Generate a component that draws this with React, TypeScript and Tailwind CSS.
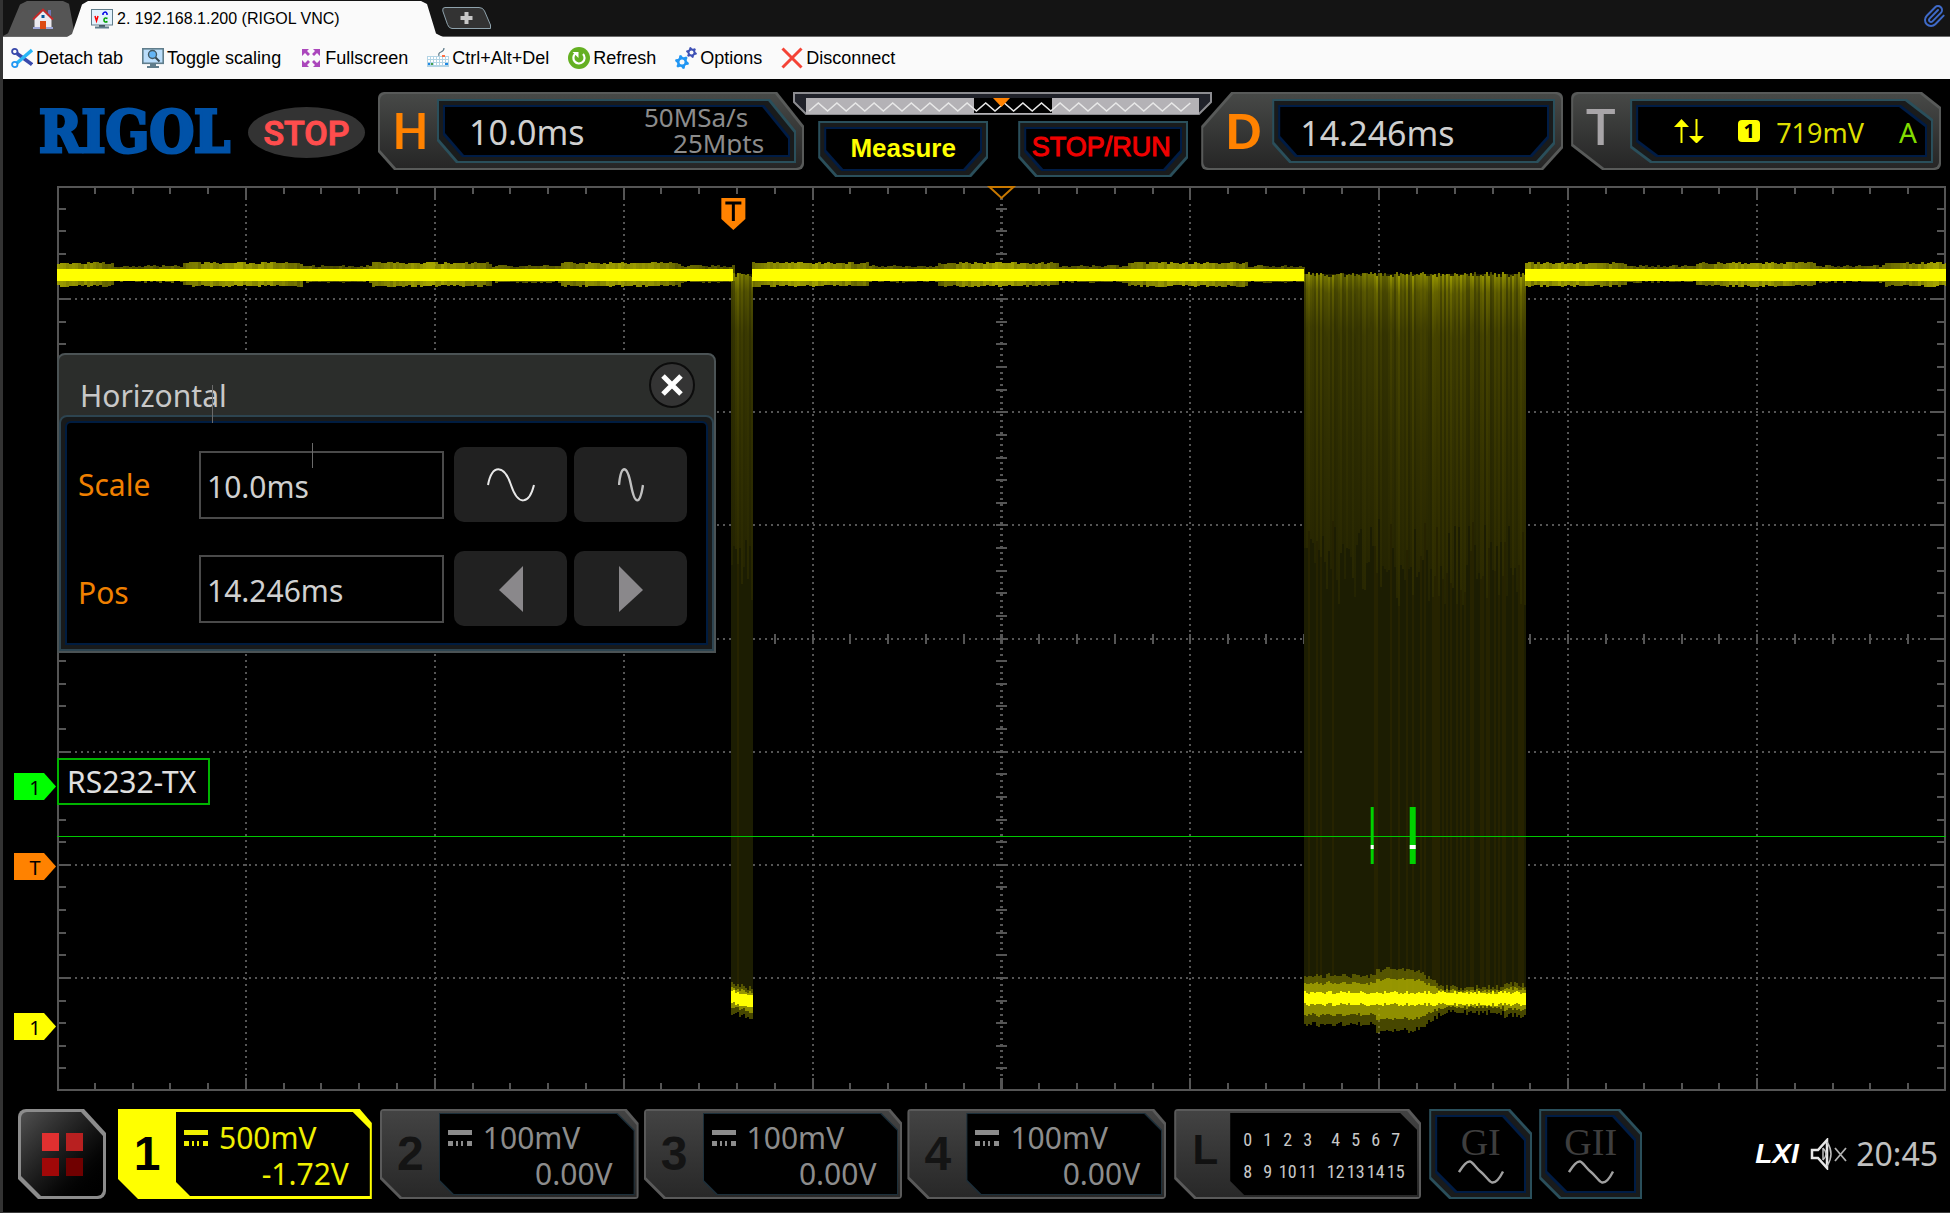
import { useState, type JSX, type ReactNode } from "react";
import { Paperclip } from "lucide-react";

interface Channel {
    id: string;
    scale: string;
    offset: string;
}

const YELLOW = "#ffff00";
const GRID = "#555555";
const GREEN = "#00c800";

// size of the plot's own coordinate system
const PLOT_W = 1888;
const PLOT_H = 905;
const DIV_X = PLOT_W / 10;
const DIV_Y = PLOT_H / 8;

const CHANNELS: Channel[] = [
    { id: "2", scale: "100mV", offset: "0.00V" },
    { id: "3", scale: "100mV", offset: "0.00V" },
    { id: "4", scale: "100mV", offset: "0.00V" },
];

const CUT_H =
    "[clip-path:polygon(0_0,calc(100%_-_27px)_0,100%_34px,100%_100%,16px_100%,0_calc(100%_-_18px))]";
const CUT_H_INNER =
    "[clip-path:polygon(0_0,calc(100%_-_26px)_0,100%_32px,100%_100%,19px_100%,0_calc(100%_-_22px))]";
const CUT_D =
    "[clip-path:polygon(30px_0,100%_0,100%_calc(100%_-_22px),calc(100%_-_20px)_100%,0_100%,0_34px)]";
const CUT_BOTTOM =
    "[clip-path:polygon(0_0,100%_0,100%_calc(100%_-_19px),calc(100%_-_17px)_100%,17px_100%,0_calc(100%_-_19px))]";
const CUT_T =
    "[clip-path:polygon(0_0,calc(100%_-_19px)_0,100%_15px,100%_100%,31px_100%,0_calc(100%_-_24px))]";
const CUT_T_INNER =
    "[clip-path:polygon(0_0,calc(100%_-_26px)_0,100%_20px,100%_100%,20px_100%,0_calc(100%_-_15px))]";
const CUT_CH =
    "[clip-path:polygon(0_0,calc(100%_-_12px)_0,100%_14px,100%_100%,20px_100%,0_calc(100%_-_20px))]";
const CUT_CH_INNER =
    "[clip-path:polygon(0_0,calc(100%_-_17px)_0,100%_17px,100%_100%,14px_100%,0_calc(100%_-_14px))]";
const CUT_GEN =
    "[clip-path:polygon(0_0,calc(100%_-_22px)_0,100%_24px,100%_100%,20px_100%,0_calc(100%_-_20px))]";

function noise(seed: number): number {
    const v = Math.sin(seed * 12.9898) * 43758.5453;
    return v - Math.floor(v);
}

function Screen({
    clip,
    className = "",
    children,
}: {
    clip: string;
    className?: string;
    children: ReactNode;
}): JSX.Element {
    return (
        <span className={`flex bg-[#2a4f5b] p-[2px] ${clip} ${className}`}>
            <span className={`flex flex-1 bg-[#191b1c] p-1 ${clip}`}>
                <span className={`flex flex-1 bg-[#001c45] p-[2px] ${clip}`}>
                    <span className={`flex flex-1 items-center bg-black ${clip}`}>
                        {children}
                    </span>
                </span>
            </span>
        </span>
    );
}

function InfoPanel({
    letter,
    letterClass,
    clip,
    innerClip,
    className,
    children,
}: {
    letter: string;
    letterClass: string;
    clip: string;
    innerClip: string;
    className: string;
    children: ReactNode;
}): JSX.Element {
    return (
        <div className={`h-[78px] rounded-md bg-[#585a59] p-[2px] ${clip} ${className}`}>
            <div
                className={`flex h-full rounded-md bg-linear-to-b from-[#474947] to-[#262626] py-[5px] pr-[6px] ${clip}`}
            >
                <span
                    className={`flex w-[57px] shrink-0 items-center justify-center text-[50px] leading-none ${letterClass}`}
                >
                    {letter}
                </span>
                <Screen clip={innerClip} className="flex-1">
                    {children}
                </Screen>
            </div>
        </div>
    );
}

function ToolButton({
    label,
    children,
}: {
    label: string;
    children: ReactNode;
}): JSX.Element {
    return (
        <button className="flex items-center gap-[3px]">
            <svg viewBox="0 0 22 22" className="size-[22px]" aria-hidden="true">
                {children}
            </svg>
            {label}
        </button>
    );
}

function gearPath(cx: number, cy: number, r: number): string {
    const pts: string[] = [];
    for (let i = 0; i < 24; i++) {
        const a = ((i + 0.5) / 24) * Math.PI * 2;
        const k = Math.floor(i / 2) % 2 === 0 ? r : r * 0.72;
        pts.push(`${cx + Math.cos(a) * k},${cy + Math.sin(a) * k}`);
    }
    return `M${pts.join("L")}Z`;
}

function TabStrip(): JSX.Element {
    return (
        <div className="flex h-[37px] items-end border-b border-[#6a6a6a] bg-[#141414]">
            <button
                aria-label="Home"
                className="flex h-[35px] w-[72px] items-center justify-center bg-[#555555] pl-2 [clip-path:polygon(0_100%,5px_92%,17px_10%,24px_0,60px_0,66px_8%,100%_100%)]"
            >
                <svg viewBox="0 0 22 22" className="size-[22px]">
                    <rect x="16" y="2" width="3" height="7" fill="#6f78b8" />
                    <path d="M2.500 11 11 3l8.500 8v10h-17z" fill="#eceaf0" />
                    <path d="M1 11.500 11 1.500l10 10" fill="none" stroke="#c62828" strokeWidth="1.800" />
                    <rect x="9.500" y="7" width="3" height="3" fill="#01579b" />
                    <rect x="8" y="13" width="6" height="8" fill="#dd4a14" />
                    <path d="M1 21h7v-2H1zM14 21h7v-2h-7z" fill="#9fa8da" />
                </svg>
            </button>
            <div className="-ml-[8px] -mb-px flex h-[36px] w-[376px] items-center gap-1 bg-[#fafafa] pl-6 font-['Liberation_Sans',sans-serif] text-[16px] text-black [clip-path:polygon(0_100%,5px_92%,15px_10%,21px_0,354px_0,360px_8%,369px_90%,100%_100%)]">
                <svg viewBox="0 0 22 20" className="h-[20px] w-[22px]" aria-hidden="true">
                    <rect x="0.500" y="0.500" width="21" height="15.500" fill="#e3f2fd" stroke="#607d8b" />
                    <rect x="8" y="16" width="6" height="2" fill="#455a64" />
                    <rect x="4" y="17.500" width="14" height="2" fill="#607d8b" />
                    <path d="m4 7 1.500 5L7 7" fill="none" stroke="red" strokeWidth="1.500" />
                    <path d="M12 6V4.500q2.500-3 4 0V6" fill="none" stroke="#0000e6" strokeWidth="1.500" />
                    <path d="M16.500 9.500q-3.500-1.500-3.500 1.500t3.500 1.500" fill="none" stroke="#00a000" strokeWidth="1.600" />
                </svg>
                <span>2. 192.168.1.200 (RIGOL VNC)</span>
            </div>
            <button aria-label="New tab" className="mb-[7px] -ml-px">
                <svg viewBox="0 0 50 22" className="h-[22px] w-[50px]">
                    <path
                        d="M3 .500h34q4 0 5.500 3.500l6 14v3.500H10q-3 0-4.500-4L.800 4Q0 .500 3 .500z"
                        fill="#333333"
                        stroke="#8fa3ad"
                    />
                    <path d="M22.500 5h4v4h4v4h-4v4h-4v-4h-4V9h4z" fill="#c8c8c8" />
                </svg>
            </button>
            <button aria-label="Attachments" className="mr-1 mb-2 ml-auto">
                <Paperclip className="size-[24px] text-[#3f6ac8]" />
            </button>
        </div>
    );
}

function Toolbar(): JSX.Element {
    return (
        <div className="flex h-[43px] items-center gap-[19px] border-b border-black bg-[#fafafa] pl-2 font-['Liberation_Sans',sans-serif] text-[18px] text-black">
            <ToolButton label="Detach tab">
                <path d="m6 6.500 15 11" stroke="#3949ab" strokeWidth="3.500" />
                <path d="m6 16 15-13" stroke="#29b6f6" strokeWidth="3.500" />
                <circle cx="3.800" cy="4.500" r="2.700" fill="none" stroke="#3949ab" strokeWidth="1.800" />
                <circle cx="3.800" cy="17.500" r="2.700" fill="none" stroke="#2196f3" strokeWidth="1.800" />
            </ToolButton>
            <ToolButton label="Toggle scaling">
                <rect x="0.800" y="1.800" width="20.400" height="14.500" fill="#bbdefb" stroke="#607d8b" strokeWidth="1.600" />
                <path d="M8 17h6v2h3v2H5v-2h3z" fill="#607d8b" />
                <circle cx="10.500" cy="7.500" r="4" fill="#64b5f6" stroke="#455a64" strokeWidth="1.400" />
                <path d="m13.500 10.500 4 4" stroke="#37474f" strokeWidth="2" />
            </ToolButton>
            <ToolButton label="Fullscreen">
                <path
                    d="M2 2h7L7 4l3 3-2 2-3-3-3 3zM20 2h-7l2 2-3 3 2 2 3-3 3 3zM2 20h7l-2-2 3-3-2-2-3 3-3-3zM20 20h-7l2-2-3-3 2-2 3 3 3-3z"
                    fill="#ab47bc"
                />
            </ToolButton>
            <ToolButton label="Ctrl+Alt+Del">
                <path d="M12 9q-1-3 2-4t3-4" fill="none" stroke="#607d8b" strokeWidth="1.200" />
                <rect x="0" y="9" width="22" height="11" fill="#b3d4e5" />
                <path d="M1 11h20M1 14h20M1 17h20" stroke="#ffffff" strokeWidth="1.800" strokeDasharray="2 1" />
                <rect x="15" y="8" width="3" height="2" fill="#ff7043" />
                <path d="M1 16h2v2H1zM18 16h3v2h-3z" fill="#1e88e5" />
                <path d="M4 16h2v2H4z" fill="#43a047" />
            </ToolButton>
            <ToolButton label="Refresh">
                <circle cx="11" cy="11" r="11" fill="#64b022" />
                <path d="M7.500 6.500A5.600 5.600 0 1 0 15 7" fill="none" stroke="#ffffff" strokeWidth="2.200" />
                <path d="M4.500 5h6v6z" fill="#ffffff" />
            </ToolButton>
            <ToolButton label="Options">
                <path d={gearPath(7, 15, 7)} fill="#2196f3" />
                <circle cx="7" cy="15" r="2.500" fill="#fafafa" />
                <path d={gearPath(16.500, 5.500, 5.500)} fill="#3f51b5" />
                <circle cx="16.500" cy="5.500" r="2" fill="#fafafa" />
            </ToolButton>
            <ToolButton label="Disconnect">
                <path d="m1.500 1.500 19 19M20.500 1.500l-19 19" stroke="#f44336" strokeWidth="3" />
            </ToolButton>
        </div>
    );
}

function MemoryBar(): JSX.Element {
    const zig = Array.from({ length: 42 }, (_, i) => `${16 + i * 9.3},${i % 2 ? 11 : 19}`);
    return (
        <svg viewBox="0 0 419 23" className="h-[23px] w-[419px]" aria-hidden="true">
            <path d="M1 1h417v9l-12 12H13L1 10z" fill="#20222a" stroke="#8c8c90" strokeWidth="2" />
            <rect x="13" y="6" width="393" height="16" fill="#b4b2b6" />
            <rect x="181" y="6" width="78" height="15" fill="#000000" />
            <polyline points={zig.join(" ")} fill="none" stroke="#e8e8e8" strokeWidth="1.600" />
            <path d="M200 6h17l-8.500 9z" fill="#ff8200" />
        </svg>
    );
}

function StatusHeader(): JSX.Element {
    return (
        <header className="flex h-[106px] items-start pt-3 pr-[9px] pl-9">
            <div className="w-[209px] pt-[10px] font-['DejaVu_Serif_Condensed','DejaVu_Serif',serif] text-[57px] leading-[60px] font-bold text-[#0052a8] [-webkit-text-stroke:3px_#0052a8]">
                RIGOL
            </div>
            <div className="mt-[15px] mr-[13px] flex h-[51px] w-[117px] shrink-0 items-center justify-center rounded-[50%] bg-[#333333] pt-[2px] font-[Roboto,sans-serif] text-[34px] font-medium text-[#ff4d4d] [-webkit-text-stroke:1px_#ff4d4d]">
                STOP
            </div>
            <InfoPanel
                letter="H"
                letterClass="pt-[2px] pl-1 font-[Roboto,sans-serif] font-medium text-[#ff8200]"
                clip={CUT_H}
                innerClip={CUT_H_INNER}
                className="flex-[427_1_0]"
            >
                <span className="pt-[2px] pl-6 text-[34px] leading-none text-[#d0d0d0]">10.0ms</span>
                <span className="ml-auto flex flex-col items-end pr-6 pb-[2px] text-[26px] leading-[26px] text-[#8c8c8c]">
                    <span className="pr-4">50MSa/s</span>
                    <span>25Mpts</span>
                </span>
            </InfoPanel>
            <div className="-mx-[11px] flex w-[419px] shrink-0 flex-col">
                <MemoryBar />
                <div className="mt-[6px] flex gap-[30px] pl-[25px] font-['Liberation_Sans',sans-serif]">
                    <button className="flex">
                        <Screen clip={CUT_BOTTOM} className="h-[56px] w-[170px]">
                            <span className="w-full pb-[2px] text-center text-[26px] font-bold text-[#ffff00]">
                                Measure
                            </span>
                        </Screen>
                    </button>
                    <button className="flex">
                        <Screen clip={CUT_BOTTOM} className="h-[56px] w-[170px]">
                            <span className="w-full pr-1 pb-1 text-center text-[27px] text-[#f00000] [-webkit-text-stroke:1px_#f00000]">
                                STOP/RUN
                            </span>
                        </Screen>
                    </button>
                </div>
            </div>
            <InfoPanel
                letter="D"
                letterClass="ml-3 pt-[2px] font-['Liberation_Sans',sans-serif] font-bold text-[#ff8200]"
                clip={CUT_D}
                innerClip={CUT_BOTTOM}
                className="flex-[362_1_0]"
            >
                <span className="pt-1 pl-5 text-[34px] leading-none text-[#d0d0d0]">14.246ms</span>
            </InfoPanel>
            <InfoPanel
                letter="T"
                letterClass="pr-[2px] pb-[6px] font-[Roboto,sans-serif] font-medium text-[#a8a5a8]"
                clip={CUT_T}
                innerClip={CUT_T_INNER}
                className="ml-2 flex-[370_1_0]"
            >
                <svg viewBox="0 0 30 24" className="ml-9 h-[24px] w-[30px]" aria-hidden="true">
                    <path d="M0 8 7.500 0 15 8H8.500v16h-2V8zM15 17h6.500V0h2v17H30l-7.500 7.500z" fill={YELLOW} />
                </svg>
                <span className="ml-[34px] flex size-[22px] items-center justify-center rounded-sm bg-[#ffff00] text-[20px] leading-none font-bold text-black">
                    1
                </span>
                <span className="ml-4 pt-[2px] text-[27px] leading-none text-[#dede00]">719mV</span>
                <span className="ml-auto pt-[2px] pr-2 text-[28px] leading-none text-[#82dc00]">A</span>
            </InfoPanel>
        </header>
    );
}

function Graticule(): JSX.Element {
    const ticksX = Array.from({ length: 49 }, (_, i) => (i + 1) * (DIV_X / 5));
    const ticksY = Array.from({ length: 39 }, (_, i) => (i + 1) * (DIV_Y / 5));
    return (
        <g stroke={GRID} strokeWidth="2" shapeRendering="crispEdges">
            {Array.from({ length: 9 }, (_, i) => (
                <line key={`v${i}`} x1={(i + 1) * DIV_X} x2={(i + 1) * DIV_X} y1="0" y2={PLOT_H} strokeDasharray="2 4" />
            ))}
            {Array.from({ length: 7 }, (_, i) => (
                <line key={`h${i}`} y1={(i + 1) * DIV_Y} y2={(i + 1) * DIV_Y} x1="0" x2={PLOT_W} strokeDasharray="2 4" />
            ))}
            {ticksX.map((x, i) => {
                const len = i % 5 === 4 ? 13 : 8;
                return (
                    <path
                        key={`tx${i}`}
                        d={`M${x} 0v${len}M${x} ${PLOT_H}v${-len}M${x} ${PLOT_H / 2 - 5}v10`}
                    />
                );
            })}
            {ticksY.map((y, i) => {
                const len = i % 5 === 4 ? 14 : 9;
                return (
                    <path
                        key={`ty${i}`}
                        d={`M0 ${y}h${len}M${PLOT_W} ${y}h${-len}M${PLOT_W / 2 - 5} ${y}h10`}
                    />
                );
            })}
            <rect x="1" y="1" width={PLOT_W - 2} height={PLOT_H - 2} fill="none" />
        </g>
    );
}

function IdleLevel({ from, to }: { from: number; to: number }): JSX.Element {
    const bars: JSX.Element[] = [];
    for (let x = from; x < to; x += 3) {
        const wave = 0.5 + 0.5 * Math.cos(((x - 184) / 189) * Math.PI * 2);
        const swell = wave > 0.3 ? 1 : 0;
        const up = 3 + swell * 3 + Math.round(noise(x) * 2);
        const down = swell * 4 + Math.round(noise(x + 7) * 2);
        bars.push(
            <rect
                key={x}
                x={x}
                y={84 - up}
                width="3"
                height={11 + up + down}
                fill="#a8a800"
                opacity={0.4 + wave * 0.4 + noise(x + 3) * 0.2}
            />,
        );
    }
    return (
        <g shapeRendering="crispEdges">
            {bars}
            <rect x={from} y="83" width={to - from} height="12" fill={YELLOW} />
        </g>
    );
}

// vertical spread of the low level: wide at first, widest in the middle, then narrow
function lowSpread(t: number): number {
    if (t < 0.32) return 22;
    if (t < 0.5) return 28;
    if (t < 0.62) return 28 - ((t - 0.5) / 0.12) * 17;
    return t > 0.9 ? 13 : 10;
}

function Burst({ from, to, wide }: { from: number; to: number; wide: boolean }): JSX.Element {
    const bars: JSX.Element[] = [];
    for (let x = from; x < to; x += 2) {
        const n = noise(x + 0.5);
        const reach = 245 + noise(x + 11) * 85;
        const spread = wide ? lowSpread((x - from) / (to - from)) : 12;
        const up = spread + noise(x + 21) * 5;
        const down = spread + noise(x + 31) * 5;
        const sag = wide ? 0 : ((x - from) / (to - from)) * 6 - 2;
        bars.push(
            <g key={x}>
                <rect x={x} y="88" width="2" height="722" fill={n > 0.7 ? "#262300" : "#1c1d02"} />
                <rect x={x} y={86 + noise(x + 2) * 5} width="2" height={reach} fill="url(#fade)" opacity={0.4 + n * 0.5} />
                <rect x={x} y={814 - up + sag} width="2" height={up + down} fill="#8e8e00" opacity="0.5" />
                <rect x={x} y={813 - up * 0.65 + sag} width="2" height={(up + down) * 0.65} fill="#c0c000" opacity="0.6" />
                <rect x={x} y={805 + noise(x + 41) * 3 + sag} width="2" height="12" fill={YELLOW} />
            </g>,
        );
    }
    return <g shapeRendering="crispEdges">{bars}</g>;
}

function Plot(): JSX.Element {
    return (
        <svg
            viewBox={`0 0 ${PLOT_W} ${PLOT_H}`}
            preserveAspectRatio="none"
            className="block h-[905px] w-full"
            role="img"
            aria-label="Waveform"
        >
            <defs>
                <linearGradient id="fade" x1="0" y1="0" x2="0" y2="1">
                    <stop offset="0" stopColor="#a8a800" />
                    <stop offset="0.06" stopColor="#727000" />
                    <stop offset="0.2" stopColor="#4c4a00" />
                    <stop offset="0.6" stopColor="#3a3800" />
                    <stop offset="1" stopColor="#2e2c00" />
                </linearGradient>
            </defs>
            <Graticule />
            <Burst from={674} to={695} wide={false} />
            <Burst from={1246} to={1467} wide />
            <IdleLevel from={0} to={676} />
            <IdleLevel from={695} to={1246} />
            <IdleLevel from={1467} to={PLOT_W} />
            <rect x="0" y="650" width={PLOT_W} height="1" fill={GREEN} />
            <path d="M1313 621h3v57h-3zM1352 621h6v57h-6z" fill="#00d200" />
            <path d="M1313 659h3v4h-3zM1352 659h6v4h-6z" fill="#ffffff" />
            <path d="M664 12h24v21l-12 11-12-11z" fill="#ff8200" />
            <path d="M668 17h16M676 17v18" stroke="#000000" strokeWidth="3" />
            <path d="M932 1h24l-12 11z" fill="#000000" stroke="#c87800" strokeWidth="2" />
        </svg>
    );
}

function LevelFlag({ text, className }: { text: string; className: string }): JSX.Element {
    return (
        <span
            className={`absolute left-[11px] flex h-[27px] w-[42px] items-center justify-center pt-[2px] text-[20px] leading-none text-black [clip-path:polygon(0_0,30px_0,100%_50%,30px_100%,0_100%)] ${className}`}
        >
            {text}
        </span>
    );
}

function HorizontalDialog({ onClose }: { onClose: () => void }): JSX.Element {
    const [scale, setScale] = useState("10.0ms");
    const [pos, setPos] = useState("14.246ms");
    const fieldClass =
        "h-[68px] w-[245px] border-2 border-[#4a4a4a] bg-black px-[6px] pt-1 text-[30px] text-[#d0d0d0] outline-none";
    const keyClass = "flex h-[75px] w-[113px] items-center justify-center rounded-[10px] bg-[#212121]";

    return (
        <section className="absolute top-[167px] left-0 w-[659px] rounded-t-lg border-2 border-[#4b5355] bg-[#2b2d2b] text-[30px]">
            <div className="flex h-[60px] items-center justify-between pr-[19px] pl-[21px]">
                <h2 className="pt-[22px] leading-none text-[#c8c8c8]">Horizontal</h2>
                <button
                    aria-label="Close"
                    onClick={onClose}
                    className="flex size-[46px] items-center justify-center rounded-full border-2 border-[#0c0c0c] bg-[#343434]"
                >
                    <svg viewBox="0 0 22 22" className="size-[22px]">
                        <path d="m2 2 18 18M20 2 2 20" stroke="#ffffff" strokeWidth="5" />
                    </svg>
                </button>
            </div>
            <div className="rounded-t-lg border-2 border-[#2d4450] bg-[#181a1b] p-1">
                <div className="grid grid-cols-[121px_245px_113px_113px] items-center gap-y-[29px] rounded-t-md border-2 border-[#001c40] bg-black pt-[24px] pb-[17px] pl-[11px]">
                    <label htmlFor="scale" className="leading-none text-[#f08000]">
                        Scale
                    </label>
                    <input id="scale" value={scale} onChange={(e) => setScale(e.target.value)} className={fieldClass} />
                    <button aria-label="Zoom out" className={`ml-[10px] ${keyClass}`}>
                        <svg viewBox="0 0 48 34" className="h-[34px] w-[48px]">
                            <path d="M1 17C5-4 17-4 24 17s18 20 23 0" fill="none" stroke="#e8e8e8" strokeWidth="2" />
                        </svg>
                    </button>
                    <button aria-label="Zoom in" className={`ml-[17px] ${keyClass}`}>
                        <svg viewBox="0 0 26 34" className="h-[34px] w-[26px]">
                            <path d="M1 17C3-4 9-4 13 17s9 20 12 0" fill="none" stroke="#c0c0c0" strokeWidth="2.400" />
                        </svg>
                    </button>
                    <label htmlFor="pos" className="pt-2 leading-none text-[#f08000]">
                        Pos
                    </label>
                    <input id="pos" value={pos} onChange={(e) => setPos(e.target.value)} className={fieldClass} />
                    <button aria-label="Move left" className={`ml-[10px] ${keyClass}`}>
                        <svg viewBox="0 0 24 46" className="h-[46px] w-[24px]">
                            <path d="M24 0v46L0 24z" fill="#8a888b" />
                        </svg>
                    </button>
                    <button aria-label="Move right" className={`ml-[17px] ${keyClass}`}>
                        <svg viewBox="0 0 24 46" className="h-[46px] w-[24px]">
                            <path d="M0 0v46l24-22z" fill="#8a888b" />
                        </svg>
                    </button>
                </div>
            </div>
            <span className="absolute top-[30px] left-[153px] h-[38px] w-px bg-[#6a6a6a]" />
            <span className="absolute top-[88px] left-[253px] h-[25px] w-px bg-[#6a6a6a]" />
        </section>
    );
}

function DcIcon(): JSX.Element {
    return (
        <svg viewBox="0 0 24 16" className="h-[16px] w-[24px] self-center" aria-hidden="true">
            <path d="M0 0h24v5H0zM0 11h5v5H0zM8 11h2v5H8zM13 11h2v5h-2zM19 11h5v5h-5z" fill="currentColor" />
        </svg>
    );
}

function ChannelReadout({ scale, offset }: { scale: string; offset: string }): JSX.Element {
    return (
        <span className="flex flex-1 flex-col justify-center px-2 pt-1 text-[30px] leading-[36px]">
            <span className="flex gap-[11px]">
                <DcIcon />
                {scale}
            </span>
            <span className="self-end pr-[13px]">{offset}</span>
        </span>
    );
}

function ChannelButton({ channel }: { channel: Channel }): JSX.Element {
    return (
        <button className={`flex h-[90px] flex-[259_1_0] rounded-sm bg-[#5a5a5a] p-[2px] ${CUT_CH}`}>
            <span className={`flex h-full flex-1 bg-linear-to-b from-[#434343] to-[#282828] py-[2px] pr-[2px] ${CUT_CH}`}>
                <span className="flex w-[57px] items-center justify-center font-['Liberation_Sans',sans-serif] text-[48px] leading-none font-bold text-[#141414]">
                    {channel.id}
                </span>
                <span className={`flex flex-1 bg-[#1c2f3a] p-px ${CUT_CH_INNER}`}>
                    <span className={`flex flex-1 bg-black text-[#8c8c8c] ${CUT_CH_INNER}`}>
                        <ChannelReadout scale={channel.scale} offset={channel.offset} />
                    </span>
                </span>
            </span>
        </button>
    );
}

function GeneratorButton({ label }: { label: string }): JSX.Element {
    return (
        <button className="flex">
            <Screen clip={CUT_GEN} className="h-[90px] w-[103px]">
                <span className="flex w-full flex-col items-center font-['Liberation_Serif',serif] text-[38px] leading-[36px] text-[#3e3e3e]">
                    {label}
                    <svg viewBox="0 0 46 24" className="h-[24px] w-[46px]" aria-hidden="true">
                        <path d="M1 12C6 4 9 1 12 1.500S18 8 23 12s8 10 11 10.500 7-3 11-11" fill="none" stroke="#a0a0a0" strokeWidth="2.400" />
                    </svg>
                </span>
            </Screen>
        </button>
    );
}

function ChannelBar(): JSX.Element {
    const rows = [
        ["0", "1", "2", "3", "4", "5", "6", "7"],
        ["8", "9", "10", "11", "12", "13", "14", "15"],
    ];
    return (
        <footer className="flex h-[122px] items-start border-b border-[#3c3c3c] pt-[18px] pr-3 pl-[15px]">
            <button aria-label="Menu" className={`mr-3 h-[90px] w-[88px] shrink-0 rounded-lg bg-[#8c8c8c] p-[3px] ${CUT_GEN}`}>
                <span className={`flex h-full items-center justify-center rounded-md bg-linear-to-br from-[#505050] to-black ${CUT_GEN}`}>
                    <span className="grid grid-cols-[17px_17px] grid-rows-[18px_18px] gap-[7px]">
                        <span className="bg-[#e03030]" />
                        <span className="bg-[#b82020]" />
                        <span className="bg-[#a00808]" />
                        <span className="bg-[#700000]" />
                    </span>
                </span>
            </button>
            <button className={`mr-2 flex h-[90px] flex-[254_1_0] bg-[#ffff00] ${CUT_CH}`}>
                <span className="flex h-full w-[58px] items-center justify-center font-['Liberation_Sans',sans-serif] text-[48px] leading-none font-bold text-black">
                    1
                </span>
                <span className={`my-[3px] mr-[2px] flex flex-1 self-stretch bg-black text-[#f0f000] ${CUT_CH_INNER}`}>
                    <ChannelReadout scale="500mV" offset="-1.72V" />
                </span>
            </button>
            <div className="flex flex-[787_1_0] gap-[5px]">
                {CHANNELS.map((c) => (
                    <ChannelButton key={c.id} channel={c} />
                ))}
            </div>
            <button className={`mx-2 flex h-[90px] w-[247px] shrink-0 rounded-sm bg-[#5a5a5a] p-[2px] ${CUT_CH}`}>
                <span className={`flex h-full flex-1 bg-linear-to-b from-[#434343] to-[#282828] py-[2px] pr-[2px] ${CUT_CH}`}>
                    <span className="flex w-[54px] items-center justify-center pb-2 pl-1 font-['Liberation_Sans',sans-serif] text-[42px] leading-none font-bold text-[#111111]">
                        L
                    </span>
                    <span className={`flex flex-1 flex-col justify-center gap-3 bg-black pt-1 pr-1 font-['Roboto_Condensed',Roboto,sans-serif] text-[18px] leading-[20px] text-[#c8c8c8] ${CUT_CH_INNER}`}>
                        {rows.map((row) => (
                            <span
                                key={row[0]}
                                className="grid grid-cols-[20px_20px_20px_20px_8px_20px_20px_20px_20px] justify-center text-center"
                            >
                                {row.map((n, i) => (
                                    <span key={n} className={i === 4 ? "col-start-6" : ""}>
                                        {n}
                                    </span>
                                ))}
                            </span>
                        ))}
                    </span>
                </span>
            </button>
            <div className="flex gap-[7px]">
                <GeneratorButton label="GI" />
                <GeneratorButton label="GII" />
            </div>
            <div className="ml-[113px] flex h-[90px] shrink-0 items-center">
                <span className="w-[47px] font-['Liberation_Sans',sans-serif] text-[28px] leading-none font-bold text-white italic">
                    LXI
                </span>
                <svg viewBox="0 0 38 32" className="ml-2 h-[32px] w-[38px]" aria-hidden="true">
                    <path d="M2 12h6l9-10v28L8 20H2z" fill="none" stroke="#e8e8e8" strokeWidth="2.500" />
                    <path d="M13 10q6 6 0 12M17 4q8 12 0 24M13 10v12" fill="none" stroke="#c0c0c0" strokeWidth="1.500" />
                    <path d="m25 10 11 13M36 10 25 23" stroke="#b0b0b0" strokeWidth="1.800" />
                </svg>
                <span className="ml-2 text-[32px] leading-none text-[#c0c0c0]">20:45</span>
            </div>
        </footer>
    );
}

export default function App(): JSX.Element {
    const [dialogOpen, setDialogOpen] = useState(true);

    return (
        <div className="min-h-screen border-l-3 border-[#333333] bg-black font-['Noto_Sans',sans-serif]">
            <TabStrip />
            <Toolbar />
            <StatusHeader />
            <main className="relative pr-1 pl-[54px]">
                <LevelFlag text="1" className="top-[587px] bg-[#00ff00]" />
                <LevelFlag text="T" className="top-[667px] bg-[#ff8200]" />
                <LevelFlag text="1" className="top-[827px] bg-[#ffff00]" />
                <div className="relative">
                    <Plot />
                    <span className="absolute top-[572px] left-0 border-2 border-[#00b400] bg-black pr-3 pl-2 text-[30px] leading-[43px] text-[#e0e0e0]">
                        RS232-TX
                    </span>
                    {dialogOpen && <HorizontalDialog onClose={() => setDialogOpen(false)} />}
                </div>
            </main>
            <ChannelBar />
        </div>
    );
}
